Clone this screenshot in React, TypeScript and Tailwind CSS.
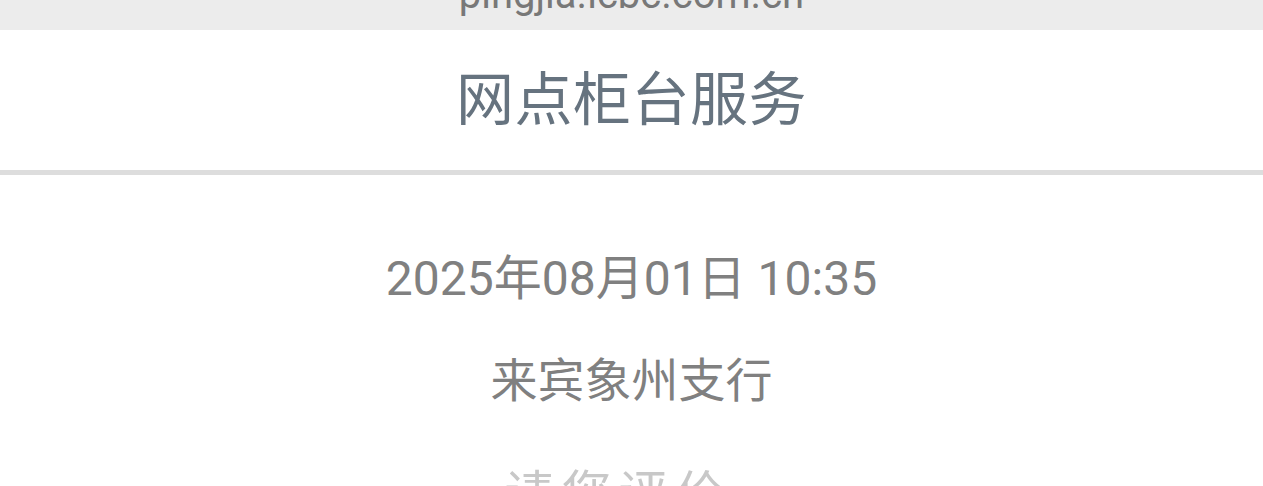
export default function App() {
  const font = { fontFamily: 'Roboto, "Noto Sans CJK SC", sans-serif' };
  return (
    <div className="w-full h-[486px] overflow-hidden bg-white" style={font}>
      <div className="h-[30px] bg-[#ececec] overflow-hidden flex justify-center">
        <div className="text-[40px] leading-[40px] -mt-[25px] text-[#787878]">pingjia.icbc.com.cn</div>
      </div>
      <div className="h-[140px] flex items-center justify-center">
        <h1 className="text-[58px] leading-none text-[#66737f] tracking-[0.5px]">网点柜台服务</h1>
      </div>
      <div className="h-[5px] bg-[#dddddd]" />
      <div className="flex flex-col items-center pt-[80px]">
        <p className="text-[48px] leading-[48px] text-[#808080]">2025年08月01日 10:35</p>
        <p className="mt-[54px] text-[47px] leading-[48px] text-[#808080]">来宾象州支行</p>
        <p className="mt-[62px] pr-[26px] text-[50px] leading-[56px] tracking-[7px] text-[#c8c8c8]">请您评价</p>
      </div>
    </div>
  );
}
